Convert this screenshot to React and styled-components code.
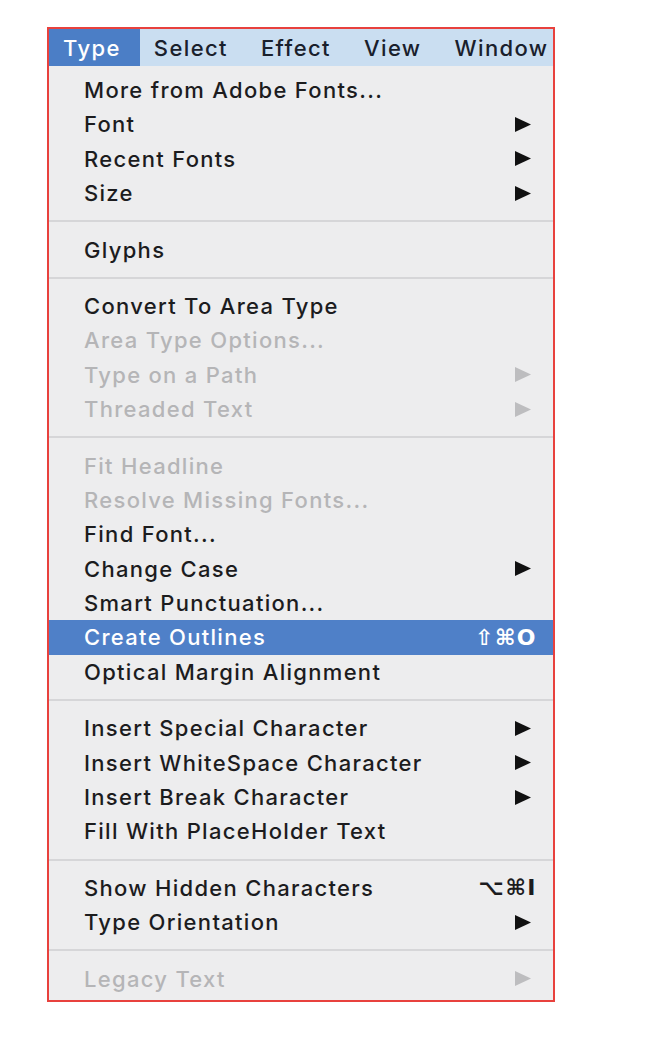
import React from "react";
import styled, { createGlobalStyle } from "styled-components";

const Global = createGlobalStyle`
  html, body { margin: 0; padding: 0; background: #ffffff; }
  body { font-family: Inter, "Liberation Sans", Arial, sans-serif; }
`;

const Page = styled.div`
  padding: 27px 0 0 47px;
`;

const Frame = styled.div`
  width: 504px;
  border: 2px solid #e8413d;
  background: #ededee;
  display: flex;
  flex-direction: column;
`;

const MenuBar = styled.div`
  height: 37px;
  display: flex;
  align-items: stretch;
  background: #cadef1;
`;

const Title = styled.div`
  display: flex;
  align-items: center;
  padding: 0 19px 0 14px;
  font-size: 22px;
  font-weight: 500;
  letter-spacing: 1.4px;
  color: ${(p) => (p.$active ? "#ffffff" : "#19202c")};
  background: ${(p) => (p.$active ? "#4b7ec6" : "transparent")};
`;

const List = styled.div`
  display: flex;
  flex-direction: column;
  padding: 6.8px 0 4px;
`;

const Row = styled.div`
  height: 34.4px;
  display: flex;
  align-items: center;
  justify-content: space-between;
  padding: 0 16px 0 35px;
  font-size: 22px;
  font-weight: 450;
  letter-spacing: 1.3px;
  color: ${(p) => (p.$hl ? "#ffffff" : p.$disabled ? "#b5b5b7" : "#1c1c1e")};
  background: ${(p) => (p.$hl ? "#4f80c8" : "transparent")};
`;

const Label = styled.span`
  white-space: nowrap;
`;

const Separator = styled.div`
  height: 22px;
  display: flex;
  align-items: center;
  &::before {
    content: "";
    flex: 1;
    height: 2px;
    background: #d6d6d8;
  }
`;

const Shortcut = styled.span`
  font-family: "DejaVu Sans", sans-serif;
  font-size: 22px;
  font-weight: bold;
  letter-spacing: 1.5px;
`;

const ArrowWrap = styled.span`
  display: flex;
  margin-right: 6px;
  color: ${(p) => (p.$disabled ? "#bdbdbf" : "#111111")};
`;

const Arrow = ({ disabled }) => (
  <ArrowWrap $disabled={disabled}>
    <svg width="16" height="15" viewBox="0 0 16 15">
      <polygon points="0,0 16,7.5 0,15" fill="currentColor" />
    </svg>
  </ArrowWrap>
);

const sections = [
  [
    { t: "More from Adobe Fonts..." },
    { t: "Font", sub: true },
    { t: "Recent Fonts", sub: true },
    { t: "Size", sub: true },
  ],
  [{ t: "Glyphs" }],
  [
    { t: "Convert To Area Type" },
    { t: "Area Type Options...", d: true },
    { t: "Type on a Path", d: true, sub: true },
    { t: "Threaded Text", d: true, sub: true },
  ],
  [
    { t: "Fit Headline", d: true },
    { t: "Resolve Missing Fonts...", d: true },
    { t: "Find Font..." },
    { t: "Change Case", sub: true },
    { t: "Smart Punctuation..." },
    { t: "Create Outlines", hl: true, sc: "⇧⌘O" },
    { t: "Optical Margin Alignment" },
  ],
  [
    { t: "Insert Special Character", sub: true },
    { t: "Insert WhiteSpace Character", sub: true },
    { t: "Insert Break Character", sub: true },
    { t: "Fill With PlaceHolder Text" },
  ],
  [
    { t: "Show Hidden Characters", sc: "⌥⌘I" },
    { t: "Type Orientation", sub: true },
  ],
  [{ t: "Legacy Text", d: true, sub: true }],
];

const titles = ["Type", "Select", "Effect", "View", "Window"];

export default function App() {
  return (
    <>
      <Global />
      <Page>
        <Frame>
          <MenuBar>
            {titles.map((t, i) => (
              <Title key={t} $active={i === 0}>
                {t}
              </Title>
            ))}
          </MenuBar>
          <List>
            {sections.map((sec, si) => (
              <React.Fragment key={si}>
                {si > 0 && <Separator />}
                {sec.map((it) => (
                  <Row key={it.t} $disabled={it.d} $hl={it.hl}>
                    <Label>{it.t}</Label>
                    {it.sub && <Arrow disabled={it.d} />}
                    {it.sc && <Shortcut>{it.sc}</Shortcut>}
                  </Row>
                ))}
              </React.Fragment>
            ))}
          </List>
        </Frame>
      </Page>
    </>
  );
}
